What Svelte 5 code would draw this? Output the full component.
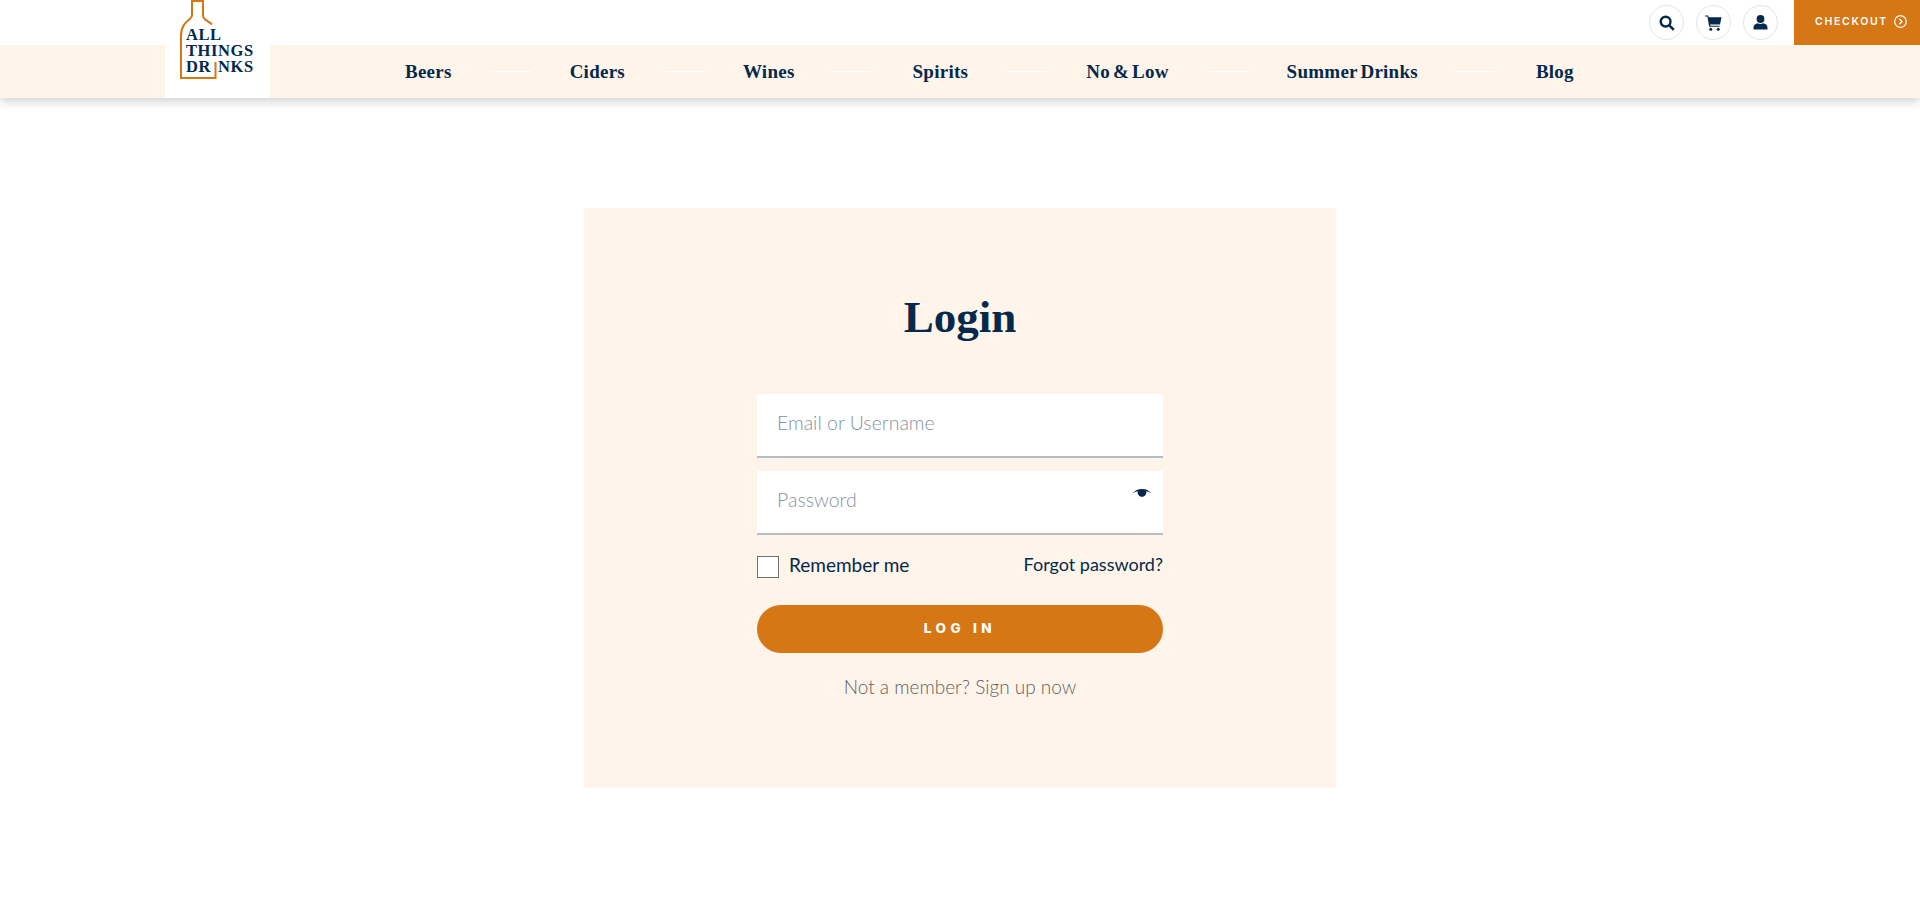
<script>
    const navItems = ['Beers', 'Ciders', 'Wines', 'Spirits', 'No & Low', 'Summer Drinks', 'Blog'];
    let remember = $state(false);
</script>

<header class="site-header">
    <a class="logo" href="#home" aria-label="All Things Drinks">
        <svg class="bottle" width="60" height="80" viewBox="0 0 60 80" fill="none">
            <path d="M47 24.5C43 20.5 38 20 38 15.5V1H27V15.5C27 20 16 21 16 36V78H50.5V62" stroke="#d57714" stroke-width="2" />
        </svg>
        <span class="logo-text">ALL<br />THINGS<br />DR<span class="logo-i">I</span>NKS</span>
    </a>

    <div class="top-row">
        <button class="round-btn" aria-label="Search">
            <svg width="16" height="16" viewBox="0 0 16 16" fill="none">
                <circle cx="6.6" cy="6.6" r="4.9" stroke="#04294a" stroke-width="2.4" />
                <path d="M10.3 10.3L14.8 14.8" stroke="#04294a" stroke-width="2.6" />
            </svg>
        </button>
        <button class="round-btn" aria-label="Cart">
            <svg width="17" height="16" viewBox="0 0 17 16" fill="#04294a">
                <path d="M0 0.5H3.2L3.8 2.2H16.5L15 9.5H5.2L5.4 10.8H14.6V11.8H4.2L2.4 1.6H0Z" />
                <circle cx="5.8" cy="14.2" r="1.5" />
                <circle cx="13.2" cy="14.2" r="1.5" />
            </svg>
        </button>
        <button class="round-btn" aria-label="Account">
            <svg width="15" height="15" viewBox="0 0 15 15" fill="#04294a">
                <circle cx="7.5" cy="4" r="3.9" />
                <path d="M0.5 14.5V12.5C0.5 9.8 3 8.4 4.6 8.2C6.4 9.2 8.6 9.2 10.4 8.2C12 8.4 14.5 9.8 14.5 12.5V14.5Z" />
            </svg>
        </button>
        <a class="checkout" href="#checkout">
            CHECKOUT
            <svg width="13" height="13" viewBox="0 0 13 13" fill="none" stroke="#fff">
                <circle cx="6.5" cy="6.5" r="5.8" stroke-width="1.2" />
                <path d="M5.2 3.8L8 6.5L5.2 9.2" stroke-width="1.3" />
            </svg>
        </a>
    </div>

    <nav class="main-nav">
        {#each navItems as item, i}
            {#if i > 0}<span class="nav-line"></span>{/if}
            <a href="#{item}">{item}</a>
        {/each}
    </nav>
</header>

<main>
    <section class="card">
        <h1>Login</h1>
        <form class="login-form" onsubmit={(e) => e.preventDefault()}>
            <input class="field" type="text" placeholder="Email or Username" />
            <div class="password-wrap">
                <input class="field" type="password" placeholder="Password" />
                <svg class="eye" width="20" height="12" viewBox="0 0 20 12" fill="#04294a">
                    <path d="M0.5 5.5C3 2.2 6 1 10 1C14 1 17 2.2 19.5 5.5C17 3.9 15.6 3.4 14.3 3.2C14.8 6 13 8.8 10 8.8C7 8.8 5.2 6 5.7 3.2C4.4 3.4 3 3.9 0.5 5.5Z" />
                </svg>
            </div>
            <div class="options">
                <label class="remember">
                    <input type="checkbox" bind:checked={remember} />
                    <span>Remember me</span>
                </label>
                <a href="#forgot">Forgot password?</a>
            </div>
            <button class="submit" type="submit">LOG IN</button>
            <p class="signup">Not a member? Sign up now</p>
        </form>
    </section>
</main>

<style>
    :global(body) {
        background: #fff;
        font-family: 'Lato', 'Liberation Sans', sans-serif;
        color: #04294a;
    }

    a {
        color: inherit;
        text-decoration: none;
    }

    .site-header {
        position: relative;
        box-shadow: 0 3px 10px rgba(0, 0, 0, 0.2);
    }

    .logo {
        position: absolute;
        left: 165px;
        top: 0;
        width: 105px;
        height: 98px;
        background: #fff;
    }

    .bottle {
        position: absolute;
        left: 0;
        top: 0;
    }

    .logo-text {
        position: absolute;
        left: 21px;
        top: 27px;
        font-family: 'Liberation Serif', serif;
        font-weight: 700;
        font-size: 16.5px;
        line-height: 16px;
        letter-spacing: 0.6px;
        color: #04294a;
    }

    .logo-i {
        color: transparent;
    }

    .top-row {
        height: 45px;
        display: flex;
        justify-content: flex-end;
        align-items: center;
        gap: 12px;
    }

    .round-btn {
        width: 35px;
        height: 35px;
        padding: 0;
        border: 1px solid #e3e5e8;
        border-radius: 50%;
        background: #fff;
        display: flex;
        align-items: center;
        justify-content: center;
    }

    .checkout {
        width: 126px;
        height: 45px;
        box-sizing: border-box;
        margin-left: 4px;
        padding: 0 0 2px 21px;
        display: flex;
        align-items: center;
        gap: 6px;
        background: #d57714;
        color: #fff;
        font-family: 'Inter', sans-serif;
        font-weight: 600;
        font-size: 10.5px;
        letter-spacing: 1.7px;
    }

    .main-nav {
        height: 53px;
        box-sizing: border-box;
        padding-left: 405px;
        display: flex;
        align-items: center;
        gap: 38.5px;
        background: #fff4ea;
    }

    .main-nav a {
        font-family: 'Liberation Serif', serif;
        font-weight: 700;
        font-size: 19px;
        letter-spacing: 0.25px;
        word-spacing: -2px;
        white-space: nowrap;
        color: #04294a;
    }

    .nav-line {
        width: 41px;
        height: 1px;
        background: #fff;
    }

    main {
        padding: 110px 0 131px;
        display: flex;
        justify-content: center;
    }

    .card {
        width: 752px;
        height: 580px;
        box-sizing: border-box;
        padding-top: 84px;
        background: #fff4ea;
    }

    h1 {
        margin: 0 0 51px;
        text-align: center;
        font-family: 'Liberation Serif', serif;
        font-weight: 700;
        font-size: 45px;
        line-height: 51px;
        color: #04294a;
    }

    .login-form {
        width: 406px;
        margin: 0 auto;
        display: flex;
        flex-direction: column;
    }

    .field {
        width: 100%;
        height: 64px;
        box-sizing: border-box;
        padding: 0 20px 6px;
        border: none;
        border-bottom: 2px solid #b4bdc6;
        border-radius: 0;
        background: #fff;
        outline: none;
        font-family: inherit;
        font-weight: 300;
        font-size: 19.5px;
        color: #04294a;
    }

    .field::placeholder {
        color: #84939f;
        opacity: 1;
    }

    .password-wrap {
        position: relative;
        margin-top: 13px;
    }

    .eye {
        position: absolute;
        right: 11px;
        top: 17px;
    }

    .options {
        margin-top: 21px;
        height: 22px;
        display: flex;
        justify-content: space-between;
        align-items: center;
        font-size: 19px;
    }

    .options span,
    .options a {
        position: relative;
        top: -3px;
    }

    .options a {
        font-size: 18px;
    }

    .remember {
        display: flex;
        align-items: center;
        gap: 10px;
    }

    .remember input {
        appearance: none;
        width: 22px;
        height: 22px;
        margin: 0;
        border: 1px solid #707070;
        border-radius: 0;
        background: #fff;
    }

    .submit {
        height: 48px;
        margin-top: 27px;
        border: none;
        border-radius: 24px;
        background: #d57714;
        color: #fff;
        font-family: 'Inter', sans-serif;
        font-weight: 800;
        font-size: 13.5px;
        letter-spacing: 4.6px;
        padding: 0 0 3px;
    }

    .signup {
        margin: 22px 0 0;
        text-align: center;
        font-size: 19px;
        font-weight: 300;
        color: #5f5f5f;
    }
</style>
